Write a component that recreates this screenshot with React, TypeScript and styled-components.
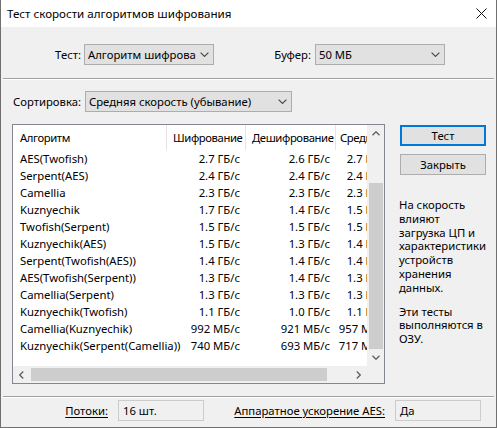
import styled, { createGlobalStyle } from "styled-components";

const GlobalStyle = createGlobalStyle`
  html, body {
    margin: 0;
    padding: 0;
    background: #f0f0f0;
  }
  * {
    box-sizing: border-box;
  }
  body {
    font-family: "Noto Sans", "Open Sans", sans-serif;
    font-size: 11.3px;
    color: #000;
  }
`;

const Window = styled.div`
  width: 497px;
  height: 428px;
  display: flex;
  flex-direction: column;
  background: #f0f0f0;
  border: 1px solid #707070;
  border-top: none;
  overflow: hidden;
`;

const TitleBar = styled.div`
  height: 27px;
  flex: none;
  background: #fff;
  display: flex;
  align-items: center;
  justify-content: space-between;
  padding-left: 6px;
  font-size: 11.6px;
`;

const CloseBox = styled.div`
  width: 30px;
  height: 27px;
  display: flex;
  align-items: center;
  justify-content: center;
`;

const FieldRow = styled.div<{ $top: number }>`
  display: flex;
  align-items: center;
  height: 21px;
  margin-top: ${({ $top }) => $top}px;
  flex: none;
`;

const FieldLabel = styled.span<{ $width: number; $gap: number; $underline?: boolean }>`
  width: ${({ $width }) => $width}px;
  padding-right: ${({ $gap }) => $gap}px;
  text-align: right;
  white-space: nowrap;
  text-decoration: ${({ $underline }) => ($underline ? "underline" : "none")};
  text-underline-offset: 2px;
`;

const Combo = styled.div<{ $width: number }>`
  width: ${({ $width }) => $width}px;
  height: 21px;
  display: flex;
  align-items: center;
  background: #e1e1e1;
  border: 1px solid #adadad;
  padding-left: 3px;
`;

const ComboText = styled.span`
  flex: 1;
  overflow: hidden;
  white-space: nowrap;
`;

const ComboArrow = styled.span`
  width: 17px;
  display: flex;
  align-items: center;
  justify-content: center;
  flex: none;
`;

const Separator = styled.div<{ $top: number }>`
  margin: ${({ $top }) => $top}px 2px 0 2px;
  height: 2px;
  flex: none;
  border-top: 1px solid #a0a0a0;
  border-bottom: 1px solid #fff;
`;

const Main = styled.div`
  display: flex;
  margin-top: 12px;
  margin-left: 11px;
  flex: none;
`;

const ListView = styled.div`
  width: 373px;
  height: 260px;
  border: 1px solid #828790;
  background: #fff;
  display: grid;
  grid-template-columns: 1fr 17px;
  grid-template-rows: 1fr 17px;
`;

const Viewport = styled.div`
  overflow: hidden;
`;

const Table = styled.div`
  width: 383px;
`;

const HeaderRow = styled.div`
  display: flex;
  height: 25px;
`;

const HeaderCell = styled.div<{ $width: number; $pad: number }>`
  width: ${({ $width }) => $width}px;
  flex: none;
  display: flex;
  align-items: center;
  padding-left: ${({ $pad }) => $pad}px;
  border-right: 1px solid #e5e5e5;
  white-space: nowrap;
  overflow: hidden;
  letter-spacing: -0.4px;
`;

const Row = styled.div`
  display: flex;
  height: 17px;
`;

const Cell = styled.div<{ $width: number; $align: string }>`
  width: ${({ $width }) => $width}px;
  flex: none;
  display: flex;
  align-items: center;
  justify-content: ${({ $align }) => ($align === "left" ? "flex-start" : "flex-end")};
  padding: 0 6px 0 7px;
  white-space: nowrap;
`;

const VScroll = styled.div`
  background: #f0f0f0;
  display: flex;
  flex-direction: column;
`;

const HScroll = styled.div`
  background: #f0f0f0;
  display: flex;
`;

const Corner = styled.div`
  background: #f0f0f0;
`;

const ArrowBtn = styled.div`
  width: 17px;
  height: 17px;
  flex: none;
  display: flex;
  align-items: center;
  justify-content: center;
`;

const VTrack = styled.div`
  flex: 1;
  display: flex;
  flex-direction: column;
`;

const HTrack = styled.div`
  flex: 1;
  display: flex;
  align-items: stretch;
  padding: 2px 0;
`;

const VThumb = styled.div<{ $offset: number }>`
  margin: ${({ $offset }) => $offset}px 1px 0 2px;
  flex: 1;
  background: #cdcdcd;
`;

const HThumb = styled.div<{ $offset: number; $size: number }>`
  margin-left: ${({ $offset }) => $offset}px;
  width: ${({ $size }) => $size}px;
  background: #cdcdcd;
`;

const Side = styled.div`
  padding-left: 14px;
  display: flex;
  flex-direction: column;
  flex: 1;
`;

const Button = styled.div<{ $default?: boolean }>`
  width: 86px;
  height: 21px;
  margin-left: 1px;
  display: flex;
  align-items: center;
  justify-content: center;
  background: #e1e1e1;
  border: ${({ $default }) => ($default ? "2px solid #0078d7" : "1px solid #adadad")};
`;

const ButtonStack = styled.div`
  display: flex;
  flex-direction: column;
  gap: 8px;
  margin-top: 1px;
`;

const Info = styled.div`
  margin-top: 23px;
  line-height: 13.8px;
  display: flex;
  flex-direction: column;
  gap: 10px;
`;

const Para = styled.p`
  margin: 0;
`;

const ReadBox = styled.div`
  width: 86px;
  height: 21px;
  border: 1px solid #cccccc;
  background: #f0f0f0;
  padding-left: 4px;
  display: flex;
  align-items: center;
`;

const Chevron = ({ dir, color = "#606060", w = 8 }: { dir: "up" | "down" | "left" | "right"; color?: string; w?: number }) => {
  const pts: Record<string, string> = {
    down: "0.5,0.5 4,4 7.5,0.5",
    up: "0.5,4 4,0.5 7.5,4",
    left: "4,0.5 0.5,4 4,7.5",
    right: "0.5,0.5 4,4 0.5,7.5",
  };
  const vertical = dir === "up" || dir === "down";
  return (
    <svg width={vertical ? w : 5} height={vertical ? 5 : w} viewBox={vertical ? "0 0 8 4.5" : "0 0 4.5 8"}>
      <polyline points={pts[dir]} fill="none" stroke={color} strokeWidth={vertical && w === 9 ? 1 : 1.3} />
    </svg>
  );
};

const columns = [
  { title: "Алгоритм", width: 154, align: "left", pad: 7 },
  { title: "Шифрование", width: 79, align: "right", pad: 6 },
  { title: "Дешифрование", width: 90, align: "right", pad: 6 },
  { title: "Средняя", width: 58, align: "right", pad: 4 },
];

const rows: string[][] = [
  ["AES(Twofish)", "2.7 ГБ/с", "2.6 ГБ/с", "2.7 ГБ/с"],
  ["Serpent(AES)", "2.4 ГБ/с", "2.4 ГБ/с", "2.4 ГБ/с"],
  ["Camellia", "2.3 ГБ/с", "2.3 ГБ/с", "2.3 ГБ/с"],
  ["Kuznyechik", "1.7 ГБ/с", "1.4 ГБ/с", "1.5 ГБ/с"],
  ["Twofish(Serpent)", "1.5 ГБ/с", "1.5 ГБ/с", "1.5 ГБ/с"],
  ["Kuznyechik(AES)", "1.5 ГБ/с", "1.3 ГБ/с", "1.4 ГБ/с"],
  ["Serpent(Twofish(AES))", "1.4 ГБ/с", "1.4 ГБ/с", "1.4 ГБ/с"],
  ["AES(Twofish(Serpent))", "1.3 ГБ/с", "1.4 ГБ/с", "1.3 ГБ/с"],
  ["Camellia(Serpent)", "1.3 ГБ/с", "1.3 ГБ/с", "1.3 ГБ/с"],
  ["Kuznyechik(Twofish)", "1.1 ГБ/с", "1.0 ГБ/с", "1.1 ГБ/с"],
  ["Camellia(Kuznyechik)", "992 МБ/с", "921 МБ/с", "957 МБ/с"],
  ["Kuznyechik(Serpent(Camellia))", "740 МБ/с", "693 МБ/с", "717 МБ/с"],
];

export default function App() {
  return (
    <>
      <GlobalStyle />
      <Window>
        <TitleBar>
          <span>Тест скорости алгоритмов шифрования</span>
          <CloseBox>
            <svg width="11" height="11" viewBox="0 0 11 11">
              <path d="M0.5 0.5 L10.5 10.5 M10.5 0.5 L0.5 10.5" stroke="#111" strokeWidth="1" />
            </svg>
          </CloseBox>
        </TitleBar>

        <FieldRow $top={17}>
          <FieldLabel $width={83} $gap={3}>Тест:</FieldLabel>
          <Combo $width={130}>
            <ComboText>Алгоритм шифрования</ComboText>
            <ComboArrow>
              <Chevron dir="down" color="#444" w={9} />
            </ComboArrow>
          </Combo>
          <FieldLabel $width={101} $gap={4}>Буфер:</FieldLabel>
          <Combo $width={130}>
            <ComboText>50 МБ</ComboText>
            <ComboArrow>
              <Chevron dir="down" color="#444" w={9} />
            </ComboArrow>
          </Combo>
        </FieldRow>

        <Separator $top={13} />

        <FieldRow $top={11}>
          <FieldLabel $width={84} $gap={4}>Сортировка:</FieldLabel>
          <Combo $width={207}>
            <ComboText>Средняя скорость (убывание)</ComboText>
            <ComboArrow>
              <Chevron dir="down" color="#444" w={9} />
            </ComboArrow>
          </Combo>
        </FieldRow>

        <Main>
          <ListView>
            <Viewport>
              <Table>
                <HeaderRow>
                  {columns.map((c) => (
                    <HeaderCell key={c.title} $width={c.width} $pad={c.pad}>
                      {c.title}
                    </HeaderCell>
                  ))}
                </HeaderRow>
                {rows.map((r) => (
                  <Row key={r[0]}>
                    {r.map((v, i) => (
                      <Cell key={i} $width={columns[i].width} $align={columns[i].align}>
                        {v}
                      </Cell>
                    ))}
                  </Row>
                ))}
              </Table>
            </Viewport>
            <VScroll>
              <ArrowBtn>
                <Chevron dir="up" />
              </ArrowBtn>
              <VTrack>
                <VThumb $offset={41} />
              </VTrack>
              <ArrowBtn>
                <Chevron dir="down" />
              </ArrowBtn>
            </VScroll>
            <HScroll>
              <ArrowBtn>
                <Chevron dir="left" />
              </ArrowBtn>
              <HTrack>
                <HThumb $offset={1} $size={296} />
              </HTrack>
              <ArrowBtn>
                <Chevron dir="right" />
              </ArrowBtn>
            </HScroll>
            <Corner />
          </ListView>

          <Side>
            <ButtonStack>
              <Button $default>Тест</Button>
              <Button>Закрыть</Button>
            </ButtonStack>
            <Info>
              <Para>
                На скорость
                <br />
                влияют
                <br />
                загрузка ЦП и
                <br />
                характеристики
                <br />
                устройств
                <br />
                хранения
                <br />
                данных.
              </Para>
              <Para>
                Эти тесты
                <br />
                выполняются в
                <br />
                ОЗУ.
              </Para>
            </Info>
          </Side>
        </Main>

        <Separator $top={12} />

        <FieldRow $top={2}>
          <FieldLabel $width={117} $gap={10} $underline>
            Потоки:
          </FieldLabel>
          <ReadBox>16 шт.</ReadBox>
          <FieldLabel $width={191} $gap={10} $underline>
            Аппаратное ускорение AES:
          </FieldLabel>
          <ReadBox>Да</ReadBox>
        </FieldRow>
      </Window>
    </>
  );
}
